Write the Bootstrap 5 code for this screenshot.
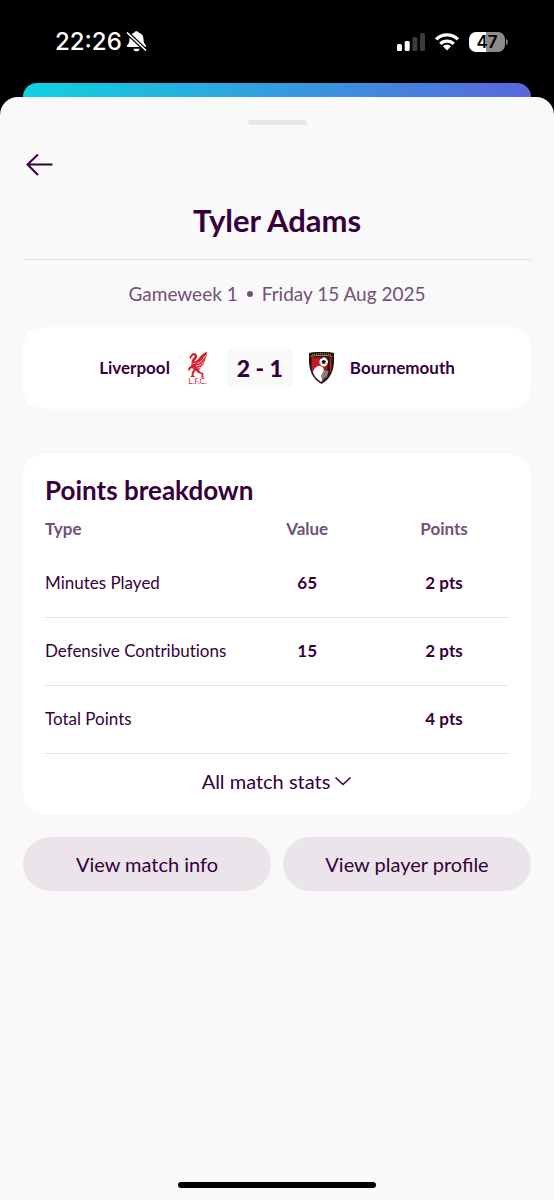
<!DOCTYPE html>
<html lang="en">
<head>
<meta charset="utf-8">
<meta name="viewport" content="width=device-width, initial-scale=1">
<title>Tyler Adams – Points breakdown</title>
<link rel="stylesheet" href="https://cdn.jsdelivr.net/npm/bootstrap@5.3.0/dist/css/bootstrap.min.css">
<style>
  :root { --ink: #37003c; --soft: #735078; --line: #e3e1e3; --lilac: #ebe4eb; --paper: #f9f9f9; }
  body { background: #000; color: var(--ink); font-family: Lato, "Open Sans", sans-serif; font-variant-ligatures: none; }
  svg { display: block; flex: none; }
  .status-row { height: 83px; padding: 0 46px 0 55px; color: #fff; }
  .clock { font: 500 24px/28px Inter, sans-serif; }
  .battery { width: 36px; height: 20px; border-radius: 7px; background: linear-gradient(90deg, #fff 47%, #8b8b8b 47%); color: #000; font: 600 17px/20px Inter, sans-serif; }
  .strip { height: 14px; margin: 0 23px; border-radius: 14px 14px 0 0; background: linear-gradient(90deg, #0ed3e1, #5867dd); }
  .sheet { background: var(--paper); border-radius: 18px 18px 0 0; padding: 23px 23px 12px; }
  .grabber { width: 59px; height: 5px; border-radius: 3px; background: var(--lilac); }
  .back-btn { margin-top: 27px; line-height: 0; width: 32px; }
  .player { font-size: 31px; line-height: 36px; font-weight: 700; padding: 24px 0 21px; border-bottom: 1px solid #dedcde; }
  .when { font-size: 19px; line-height: 24px; color: var(--soft); margin: 22px 0 21px; gap: 9px; }
  .bullet { width: 6px; height: 6px; border-radius: 50%; background: var(--soft); }
  .panel { background: #fff; border-radius: 22px; }
  .fixture { height: 82px; font-size: 17px; font-weight: 700; gap: 16px; }
  .score { width: 66px; line-height: 38px; font-size: 23px; border-radius: 4px; background: var(--paper); }
  .breakdown { margin-top: 45px; padding: 22px 22px 6px; }
  .breakdown h2 { font-size: 26px; line-height: 28px; font-weight: 700; margin-bottom: 4px; }
  .points { width: 100%; table-layout: fixed; font-size: 17px; line-height: 24px; }
  .points th, .points td { padding: 0; }
  .points thead th { height: 41px; color: var(--soft); font-weight: 700; }
  .points tbody tr { height: 68px; border-bottom: 1px solid var(--line); }
  .points tbody th { font-weight: 400; }
  .points td { font-weight: 700; }
  .c-type { width: 41%; } .c-value { width: 31%; } .c-points { width: 28%; }
  .text-btn, .pill-btn { font-size: 20px; line-height: 24px; color: var(--ink); border: 0; }
  .text-btn { height: 54px; }
  .pill-btn { height: 54px; background: var(--lilac); }
  .pill-btn:hover { background: #dfd3df; }
  .actions { margin-top: 23px; gap: 12px; }
  .home-bar { width: 198px; height: 6px; border-radius: 3px; background: #000; }
</style>
</head>
<body class="d-flex flex-column min-vh-100">
<header class="status-row d-flex align-items-center justify-content-between">
  <div class="d-flex align-items-center gap-1">
    <span class="clock">22:26</span>
    <svg width="21" height="21" viewBox="0 0 21 21" role="img" aria-label="Silent mode">
      <path fill="#fff" d="M10.500.3c1 0 1.800.5 2.100 1.200 3.200.9 4.900 3.300 4.900 6.500 0 3.500.8 4.700 2.200 6.100.8.800.4 1.900-.7 1.900H2c-1.100 0-1.500-1.100-.7-1.900 1.400-1.400 2.200-2.600 2.200-6.100 0-3.200 1.700-5.600 4.900-6.500C8.700.8 9.500.3 10.500.3z"/>
      <path fill="#fff" d="M7.300 17.700h6.400c-.3 1.600-1.600 2.600-3.200 2.600s-2.900-1-3.200-2.600z"/>
      <path stroke="#000" stroke-width="4" d="M1 1.500l19 18"/>
      <path stroke="#fff" stroke-width="1.700" stroke-linecap="round" d="M1.500 2l18 17"/>
    </svg>
  </div>
  <div class="d-flex align-items-center">
    <svg width="28" height="18" viewBox="0 0 28 18" role="img" aria-label="Signal">
      <g fill="#fff"><rect x="0" y="11" width="5" height="7" rx="1.500"/><rect x="7.700" y="8" width="5" height="10" rx="1.500"/></g>
      <g fill="#3b3b3b"><rect x="15.400" y="4" width="5" height="14" rx="1.500"/><rect x="23" y="0" width="5" height="18" rx="1.500"/></g>
    </svg>
    <svg class="mx-2" width="28" height="19" viewBox="0 0 28 19" role="img" aria-label="Wi-Fi">
      <g fill="none" stroke="#fff" stroke-width="3.200"><path d="M3.100 7.300a15.600 15.600 0 0 1 21.800 0"/><path d="M7.300 11.900a9.600 9.600 0 0 1 13.400 0"/></g>
      <path fill="#fff" d="M14 18.400l-4.100-4.100a5.800 5.800 0 0 1 8.200 0z"/>
    </svg>
    <span class="battery text-center">47</span>
    <svg width="3" height="6" viewBox="0 0 3 6" aria-hidden="true"><path fill="#8b8b8b" d="M1 0c2.400 1 2.400 5 0 6z"/></svg>
  </div>
</header>

<div class="strip"></div>
<main class="sheet flex-grow-1 d-flex flex-column">
  <div class="grabber mx-auto"></div>
  <button type="button" class="back-btn btn p-0 border-0 text-start" aria-label="Back">
    <svg width="32" height="26" viewBox="0 0 32 26" fill="none" stroke="#37003c" stroke-width="2"><path d="M29.500 12.500H4.500M15 2.500L4.500 12.500 15 23"/></svg>
  </button>

  <h1 class="player text-center mb-0">Tyler Adams</h1>
  <p class="when d-flex align-items-center justify-content-center"><span>Gameweek 1</span><span class="bullet"></span><span>Friday 15 Aug 2025</span></p>

  <section class="panel fixture d-flex align-items-center justify-content-center">
    <span>Liverpool</span>
    <svg width="25" height="34" viewBox="0 0 25 34" role="img" aria-label="Liverpool crest">
      <path fill="#d5212e" d="M4 8.500L3.500 6l2-2.700C7 1.300 10 1.800 11 4.200c.6 1.700-.2 3.100-1.500 4.500L8 10.600c2.400-.4 3.600-1.600 5-3.500 1.800-2.600 4-4.500 8-6.500l-.4 3.600-1 3.200-.8 3-1.300 2.800-2.200 3-2.300 2.500 1.200 2.200 3.300 1-.5 3.400 1.500 1.300h-3.300l.5-3.500-3.500-1-2.600-2.500-2.200 3.200.3 2.200 2 1.100H4l1.600-1.500.2-3 2-3-1.700-1.600-1.800 1-1.400 2.200-1-1.700 1.300-2.400 2-1.300.4-2.600c-.5-2 .5-4 2.400-5.700.8-1 .6-2.200-.4-2.500L6 5.700z"/>
      <path d="M11 12.500c4-1 6-4 8.500-8M10 15c4-.2 6.600-2.500 8.600-5M11.500 17c2.500 0 4-1 5.500-2.800M6.500 12c1.300 1 2.200.8 3-.2" fill="none" stroke="#fff" stroke-width=".8"/>
      <text x="11.500" y="33" text-anchor="middle" font-family="Lato, sans-serif" font-size="8" font-weight="400" fill="#d5212e">L.F.C.</text>
    </svg>
    <strong class="score text-center">2 - 1</strong>
    <svg width="25" height="32" viewBox="0 0 25 32" role="img" aria-label="Bournemouth crest">
      <defs><clipPath id="shield"><path d="M1.500 2C8 .3 17 .3 23.500 2c.3 9 .6 21-11 28.300C.9 23 1.200 11 1.500 2z"/></clipPath></defs>
      <path fill="#1b1412" d="M0 1C7-.5 18-.5 25 1c.4 11 .3 23.500-12.500 31C-.3 24.500-.4 12 0 1z"/>
      <g clip-path="url(#shield)">
        <path fill="#c31924" d="M2.500 5.500h20V32h-20z"/>
        <path stroke="#1b1412" stroke-width="2.200" d="M19.500 5v20M15.500 17v14"/>
        <path fill="#fff" d="M4 20c1-4 3.500-6 7-6.300l3 1.800 1.500 3.500-2.500 2.500 1 4.500-2 5C8 29 4.500 25 4 20z"/>
        <path fill="#85817f" d="M14.500 18l5 1-1.500 5-5 4.500-1-5 2-2z"/>
      </g>
      <path fill="none" stroke="#c9a75b" stroke-width=".8" d="M1.500 4.500C8 3 17 3 23.500 4.500"/>
      <path fill="none" stroke="#aa8b47" stroke-width="1" stroke-dasharray="1.200 .8" d="M3 2.700c6-1.200 13-1.200 19 0"/>
      <circle cx="14.700" cy="10" r="4.400" fill="#fff"/>
      <path fill="#151515" d="M14.700 7.700l2.200 1.600-.8 2.500h-2.800l-.8-2.500zM11.500 6.900l2-1.200-.5 1.300zM16.800 5.900l2 2-1.200-.3zM10.400 10.600l1 .3.500 1.900zM18.900 11l-1 .2-.4 1.700z"/>
    </svg>
    <span>Bournemouth</span>
  </section>

  <section class="panel breakdown">
    <h2>Points breakdown</h2>
    <table class="points">
      <colgroup><col class="c-type"><col class="c-value"><col class="c-points"></colgroup>
      <thead><tr><th scope="col">Type</th><th scope="col" class="text-center">Value</th><th scope="col" class="text-center">Points</th></tr></thead>
      <tbody>
        <tr><th scope="row">Minutes Played</th><td class="text-center">65</td><td class="text-center">2 pts</td></tr>
        <tr><th scope="row">Defensive Contributions</th><td class="text-center">15</td><td class="text-center">2 pts</td></tr>
        <tr><th scope="row">Total Points</th><td></td><td class="text-center">4 pts</td></tr>
      </tbody>
    </table>
    <button type="button" class="text-btn btn w-100 p-0 d-flex align-items-center justify-content-center gap-1" aria-expanded="false">
      All match stats
      <svg width="18" height="12" viewBox="0 0 18 12" fill="none" stroke="#37003c" stroke-width="1.600"><path d="M1.500 2.500L9 9.500l7.500-7"/></svg>
    </button>
  </section>

  <div class="actions d-flex">
    <button type="button" class="pill-btn btn rounded-pill col">View match info</button>
    <button type="button" class="pill-btn btn rounded-pill col">View player profile</button>
  </div>

  <div class="home-bar mx-auto mt-auto"></div>
</main>
<script src="https://cdn.jsdelivr.net/npm/bootstrap@5.3.0/dist/js/bootstrap.bundle.min.js"></script>
</body>
</html>
